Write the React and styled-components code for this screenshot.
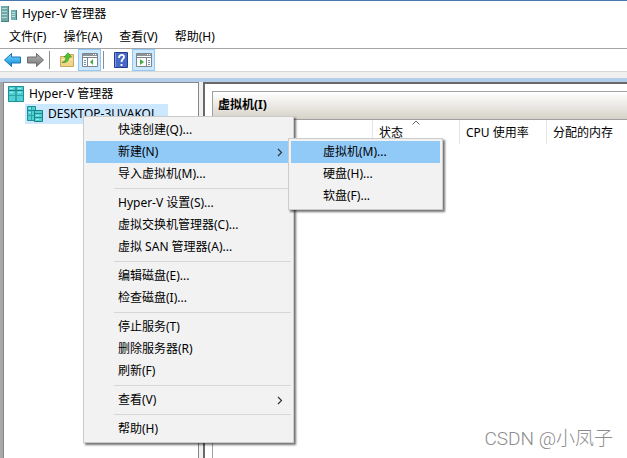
import React, { useState } from 'react'
import styled, { createGlobalStyle } from 'styled-components'

const GlobalStyle = createGlobalStyle`
* {
  box-sizing: border-box;
}
body {
  margin: 0;
  overflow: hidden;
  background: #ffffff;
}
body, button {
  font-family: "Noto Sans", "Noto Sans CJK SC", sans-serif;
  font-size: 12px;
  color: #000000;
}
`
const Window = styled.div`
min-height: 100vh;
display: flex;
flex-direction: column;
border-top: 1px solid #4a78a8;
`
const TitleBar = styled.header`
display: flex;
align-items: center;
gap: 5px;
height: 25px;
padding: 0 1px;
`
const Title = styled.h1`
margin: 0;
font-size: 12px;
font-weight: 400;
line-height: 18px;
`
const MenuBar = styled.nav`
display: flex;
gap: 17px;
height: 23px;
padding: 0 9px;
border-bottom: 1px solid #a5a5a5;
`
const MenuBarItem = styled.button`
padding: 0;
border: 0;
background: none;
line-height: 18px;
`
const Toolbar = styled.div`
display: flex;
align-items: center;
height: 23px;
padding: 0 1px;
border-bottom: 1px solid #d8d8d8;
`
const ToolButton = styled.button`
display: flex;
align-items: center;
justify-content: center;
width: 23px;
height: 22px;
padding: 0;
border: 1px solid ${(props) => (props.$checked ? '#90c8f6' : 'transparent')};
background: ${(props) => (props.$checked ? '#cce8ff' : 'none')};
`
const ToolDivider = styled.div`
width: 1px;
height: 18px;
margin: 0 5px 0 2px;
background: #8d8d8d;
`
const Strip = styled.div`
height: 10px;
background: #f0f0f0;
border-bottom: 4px solid #b4cde8;
`
const Main = styled.main`
flex: 1;
display: flex;
gap: 4px;
padding-left: 3px;
background: #f0f0f0;
box-shadow: inset 3px 0 #a8a8a8;
`
const TreePane = styled.aside`
width: 196px;
flex: none;
padding: 1px 4px;
background: #ffffff;
border: 1px solid #828790;
border-bottom: 0;
`
const TreeRow = styled.div`
display: flex;
align-items: center;
width: max-content;
height: 20px;
gap: 5px;
margin-left: ${(props) => (props.$level ? '17px' : '0')};
padding-right: 11px;
padding-left: ${(props) => (props.$level ? '2px' : '0')};
background: ${(props) => (props.$selected ? '#cce8ff' : 'none')};
line-height: 18px;
`
const Content = styled.section`
flex: 1;
padding: 7px 0 0 7px;
background: #ffffff;
border-top: 2px solid #696969;
border-left: 2px solid #696969;
`
const Machines = styled.div`
height: 100%;
border-top: 1px solid #a0a0a0;
border-left: 1px solid #a0a0a0;
`
const PaneTitle = styled.h2`
margin: 0;
height: 28px;
padding: 0 5px;
font-size: 12px;
font-weight: 700;
line-height: 26px;
background: linear-gradient(#ffffff, #d6d2c9);
border-bottom: 1px solid #a0a0a0;
`
const Table = styled.table`
width: 100%;
table-layout: fixed;
border-collapse: separate;
border-spacing: 0;
`
const Column = styled.th`
position: relative;
width: ${(props) => props.$width};
height: 24px;
padding: 0 6px;
border-right: 1px solid #e5e5e5;
font-weight: 400;
text-align: left;
white-space: nowrap;
&:last-child {
  border-right: 0;
}
`
const SortMark = styled.svg`
position: absolute;
top: 0;
left: calc(50% - 4px);
`
const Menu = styled.ul`
position: absolute;
z-index: 1;
top: ${(props) => props.$top};
left: ${(props) => props.$left};
width: ${(props) => props.$width};
margin: 0;
padding: 2px;
list-style: none;
background: #f2f2f2;
border: 1px solid #cccccc;
box-shadow: 2px 2px 2px rgba(0, 0, 0, 0.55);
`
const MenuEntry = styled.li`
position: relative;
`
const MenuButton = styled.button`
display: flex;
align-items: center;
justify-content: space-between;
width: 100%;
height: 22px;
padding: 0 8px 0 32px;
border: 0;
background: ${(props) => (props.$active ? '#91c9f7' : 'none')};
line-height: 18px;
text-align: left;
white-space: nowrap;
`
const Separator = styled.li`
height: 1px;
margin: 3px 0 3px 28px;
background: #d7d7d7;
`
const Watermark = styled.div`
position: absolute;
right: 14px;
bottom: 6px;
font-family: Roboto, "Noto Sans CJK SC", sans-serif;
font-size: 19px;
font-weight: 300;
line-height: 26px;
color: #8c8c8c;
`

const ManagerIcon = () => (
  <svg width="16" height="16" viewBox="0 0 16 16">
    <path d="M0 0h8v16H0z" fill="#6fa9a8" />
    <path d="M1 2.500h5M1 5.500h5M1 8.500h5M1 11.500h5" stroke="#b5d8d4" />
    <path d="M7.500 0v16M0 15.500h8" stroke="#487f82" />
    <path d="M10 4h6v10h-6z" fill="#6fb0b0" />
    <path d="M11 6.500h3M11 8.500h3M11 10.500h3" stroke="#c0e2de" />
    <path d="M15.500 4v10" stroke="#3f7c80" />
  </svg>
)

const RootIcon = () => (
  <svg width="16" height="16" viewBox="0 0 16 16">
    <path d="M.5.5h15v15H.5z" fill="#4fd0d2" stroke="#1f8f95" />
    <path d="M1 4.500h14M8 1v14" stroke="#1a7f86" />
    <path d="M1 9.500h14" stroke="#2ba3a8" />
    <path d="M2 2.500h3M10 2.500h3M2 6.500h3M10 6.500h3" stroke="#a0efec" />
  </svg>
)

const ServerIcon = () => (
  <svg width="16" height="16" viewBox="0 0 16 16">
    <path d="M.5.5h8v14h-8z" fill="#4fd0d2" stroke="#1f8f95" />
    <path d="M1 4.500h7" stroke="#1a7f86" />
    <path d="M1 9.500h7M4.500 1v13" stroke="#2ba3a8" />
    <path d="M2 2.500h2M2 6.500h2" stroke="#a0efec" />
    <path d="M7.500 4.500h8v11h-8z" fill="#4fd0d2" stroke="#1a7f86" />
    <path d="M8 7.500h7M8 11.500h7" stroke="#1f8f95" />
    <path d="M9 9.500h3M9 13.500h3" stroke="#a0efec" />
  </svg>
)

const Arrow = ({ forward }) => (
  <svg width="17" height="16" viewBox="0 0 17 16">
    <defs>
      <linearGradient id={forward ? 'fwd' : 'back'} x1="0" y1="0" x2="0" y2="1">
        <stop offset="0" stopColor={forward ? '#b5b5b5' : '#7ed8ff'} />
        <stop offset="1" stopColor={forward ? '#777777' : '#078bd8'} />
      </linearGradient>
    </defs>
    <path
      d={forward ? 'M16.500 8 9.500 1.500V5h-9v6h9v3.500z' : 'M.5 8l7-6.500V5h9v6h-9v3.500z'}
      fill={forward ? 'url(#fwd)' : 'url(#back)'}
      stroke={forward ? '#6b6b6b' : '#1675b5'}
    />
  </svg>
)

const FolderUpIcon = () => (
  <svg width="16" height="16" viewBox="0 0 16 16">
    <path d="M1.500 4.500h6l1-2h6v12h-13z" fill="#f0d58a" stroke="#c9a85a" />
    <path d="M2 7.500h12" stroke="#fbeabb" />
    <path d="M3 10.500c3-1 4-2.500 4-5.500H5L9 .8 12.500 5H10c0 4-3 6-7 5.500z" fill="#51c52f" stroke="#278b1d" strokeWidth=".6" />
  </svg>
)

const PaneIcon = ({ right }) => (
  <svg width="16" height="14" viewBox="0 0 16 14">
    <path d="M.5.5h15v13H.5z" fill="#ffffff" stroke="#7c858d" />
    <path d="M1 2h14" stroke="#8b949b" strokeWidth="2" />
    <path d="M11 1.500h1M13 1.500h1" stroke="#ffffff" />
    <path d="M1 4.500h14" stroke="#7c858d" />
    {right ? (
      <>
        <path d="M10.500 5v8" stroke="#7c858d" />
        <path d="M12 7.500h2M12 9.500h2M12 11.500h2" stroke="#6d90b5" />
        <path d="M4 6v6l4-3z" fill="#42ae3f" />
      </>
    ) : (
      <>
        <path d="M5.500 5v8" stroke="#7c858d" />
        <path d="M2 7.500h2M2 9.500h2M2 11.500h2" stroke="#6d90b5" />
        <path d="M11 6v6L8 9z" fill="#42ae3f" />
      </>
    )}
  </svg>
)

const HelpIcon = () => (
  <svg width="14" height="16" viewBox="0 0 14 16">
    <path d="M.5.5h13v15H.5z" fill="#4669c5" stroke="#263e90" />
    <path d="M1.500 1v14" stroke="#7c9be0" />
    <path d="M5 6c0-4 5-4 5-1 0 2-2.500 2-2.500 5M7.500 12v2" fill="none" stroke="#ffffff" strokeWidth="1.800" />
  </svg>
)

const Chevron = () => (
  <svg width="6" height="9" viewBox="0 0 6 9">
    <path d="M1 1l3.500 3.500L1 8" fill="none" stroke="#333333" strokeWidth="1.200" />
  </svg>
)

const menuItems = [
  { label: '快速创建(Q)...' },
  { label: '新建(N)', children: ['虚拟机(M)...', '硬盘(H)...', '软盘(F)...'] },
  { label: '导入虚拟机(M)...' },
  null,
  { label: 'Hyper-V 设置(S)...' },
  { label: '虚拟交换机管理器(C)...' },
  { label: '虚拟 SAN 管理器(A)...' },
  null,
  { label: '编辑磁盘(E)...' },
  { label: '检查磁盘(I)...' },
  null,
  { label: '停止服务(T)' },
  { label: '删除服务器(R)' },
  { label: '刷新(F)' },
  null,
  { label: '查看(V)', more: true },
  null,
  { label: '帮助(H)' },
]

function ContextMenu() {
  const [open, setOpen] = useState('新建(N)')
  const [active, setActive] = useState('虚拟机(M)...')
  return (
    <Menu $top="116px" $left="83px" $width="211px">
      {menuItems.map((item, i) =>
        item ? (
          <MenuEntry key={item.label}>
            <MenuButton $active={open === item.label} onClick={() => setOpen(item.label)}>
              {item.label}
              {(item.children || item.more) && <Chevron />}
            </MenuButton>
            {item.children && open === item.label && (
              <Menu $top="-3px" $left="calc(100% - 3px)" $width="155px">
                {item.children.map((child) => (
                  <MenuEntry key={child}>
                    <MenuButton $active={active === child} onClick={() => setActive(child)}>
                      {child}
                    </MenuButton>
                  </MenuEntry>
                ))}
              </Menu>
            )}
          </MenuEntry>
        ) : (
          <Separator key={i} />
        )
      )}
    </Menu>
  )
}

function App() {
  return (
    <Window>
      <GlobalStyle />
      <TitleBar>
        <ManagerIcon />
        <Title>Hyper-V 管理器</Title>
      </TitleBar>
      <MenuBar>
        <MenuBarItem>文件(F)</MenuBarItem>
        <MenuBarItem>操作(A)</MenuBarItem>
        <MenuBarItem>查看(V)</MenuBarItem>
        <MenuBarItem>帮助(H)</MenuBarItem>
      </MenuBar>
      <Toolbar>
        <ToolButton aria-label="后退"><Arrow /></ToolButton>
        <ToolButton aria-label="前进"><Arrow forward /></ToolButton>
        <ToolDivider />
        <ToolButton aria-label="向上"><FolderUpIcon /></ToolButton>
        <ToolButton $checked aria-label="控制台树"><PaneIcon /></ToolButton>
        <ToolDivider />
        <ToolButton aria-label="帮助"><HelpIcon /></ToolButton>
        <ToolButton $checked aria-label="操作窗格"><PaneIcon right /></ToolButton>
      </Toolbar>
      <Strip />
      <Main>
        <TreePane>
          <TreeRow><RootIcon />Hyper-V 管理器</TreeRow>
          <TreeRow $level $selected><ServerIcon />DESKTOP-3UVAKOL</TreeRow>
        </TreePane>
        <Content>
          <Machines>
            <PaneTitle>虚拟机(I)</PaneTitle>
            <Table>
              <thead>
                <tr>
                  <Column $width="160px">名称</Column>
                  <Column $width="87px">
                    状态
                    <SortMark width="8" height="5" viewBox="0 0 8 5">
                      <path d="M.5 4.500L4 1l3.500 3.500" fill="none" stroke="#666666" />
                    </SortMark>
                  </Column>
                  <Column $width="87px">CPU 使用率</Column>
                  <Column>分配的内存</Column>
                </tr>
              </thead>
            </Table>
          </Machines>
        </Content>
      </Main>
      <ContextMenu />
      <Watermark>CSDN @小凤子</Watermark>
    </Window>
  )
}

export default App
